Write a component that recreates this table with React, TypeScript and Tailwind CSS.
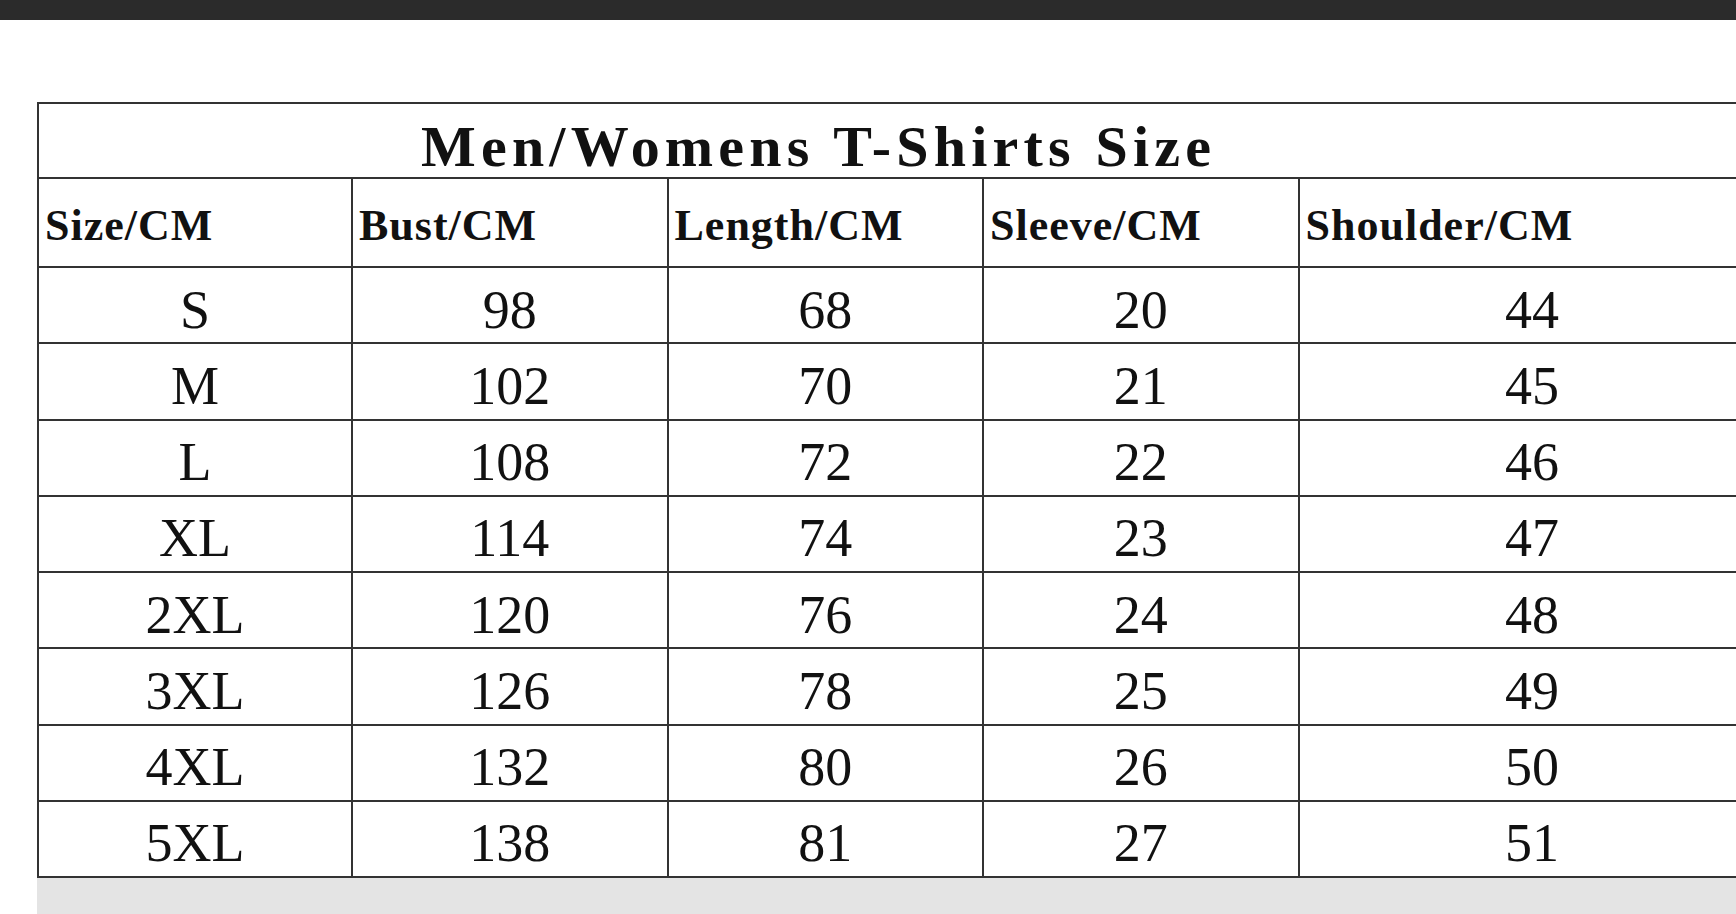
import React from 'react';

const headers = ['Size/CM', 'Bust/CM', 'Length/CM', 'Sleeve/CM', 'Shoulder/CM'];

const rows: string[][] = [
  ['S', '98', '68', '20', '44'],
  ['M', '102', '70', '21', '45'],
  ['L', '108', '72', '22', '46'],
  ['XL', '114', '74', '23', '47'],
  ['2XL', '120', '76', '24', '48'],
  ['3XL', '126', '78', '25', '49'],
  ['4XL', '132', '80', '26', '50'],
  ['5XL', '138', '81', '27', '51'],
];

const App: React.FC = () => {
  return (
    <div className="h-[914px] w-full overflow-hidden bg-white text-[#111]">
      <div className="h-[20px] bg-[#2b2b2b]" />
      <div className="pl-[37px] pt-[82px]">
        <div className="w-[1730px] border-l-2 border-t-2 border-[#333]">
          {/* title */}
          <div className="flex h-[75px] items-center border-b-2 border-r-2 border-[#333] pl-[382px] pt-[12px]">
            <span className="font-['Liberation_Serif',serif] text-[58px] font-bold leading-none tracking-[5.2px]">
              Men/Womens T-Shirts Size
            </span>
          </div>

          <div className="grid grid-cols-[314px_315.5px_315.5px_315.5px_467px]">
            {headers.map(h => (
              <div
                key={h}
                className="flex h-[89px] items-center border-b-2 border-r-2 border-[#333] pl-[6px] pt-[6px]"
              >
                <span className="font-['Liberation_Serif',serif] text-[44px] font-bold leading-none tracking-[1px]">
                  {h}
                </span>
              </div>
            ))}

            {rows.map(row =>
              row.map((cell, i) => (
                <div
                  key={row[0] + i}
                  className="flex h-[76.25px] items-center justify-center border-b-2 border-r-2 border-[#333] pt-[9px]"
                >
                  <span className="font-['Liberation_Serif',serif] text-[54px] leading-none">{cell}</span>
                </div>
              ))
            )}
          </div>
        </div>
        <div className="h-[40px] bg-[#e4e4e4]" />
      </div>
    </div>
  );
};

export default App;
